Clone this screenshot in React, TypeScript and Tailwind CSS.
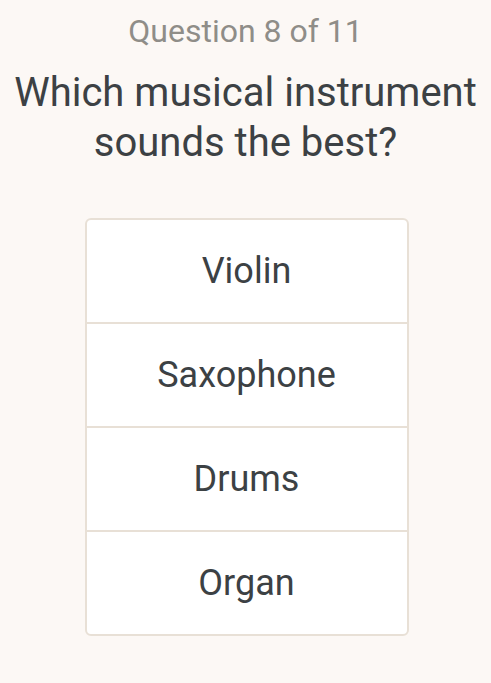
const options = ["Violin", "Saxophone", "Drums", "Organ"];

function QuizPage() {
  return (
    <div
      className="min-h-[683px] w-full bg-[#fcf8f5] text-center"
      style={{ fontFamily: "Roboto, 'Liberation Sans', sans-serif" }}
    >
      <div className="pt-[12px] text-[32px] leading-[38px] text-[#8f8d88]">
        Question 8 of 11
      </div>
      <h1 className="mt-[18px] px-2 text-[40px] leading-[50px] text-[#3c4144]">
        Which musical instrument sounds the best?
      </h1>
      <div className="mx-auto mt-[50px] w-[324px] translate-x-[1px] overflow-hidden rounded-[6px] border-2 border-[#e8e0d6] bg-white">
        {options.map((opt, i) => (
          <button
            key={opt}
            className={
              "flex w-full items-center justify-center text-[36px] text-[#3c4144] " +
              (i > 0 ? "h-[104px] border-t-2 border-[#e8e0d6]" : "h-[102px]")
            }
          >
            {opt}
          </button>
        ))}
      </div>
    </div>
  );
}

export default QuizPage;
